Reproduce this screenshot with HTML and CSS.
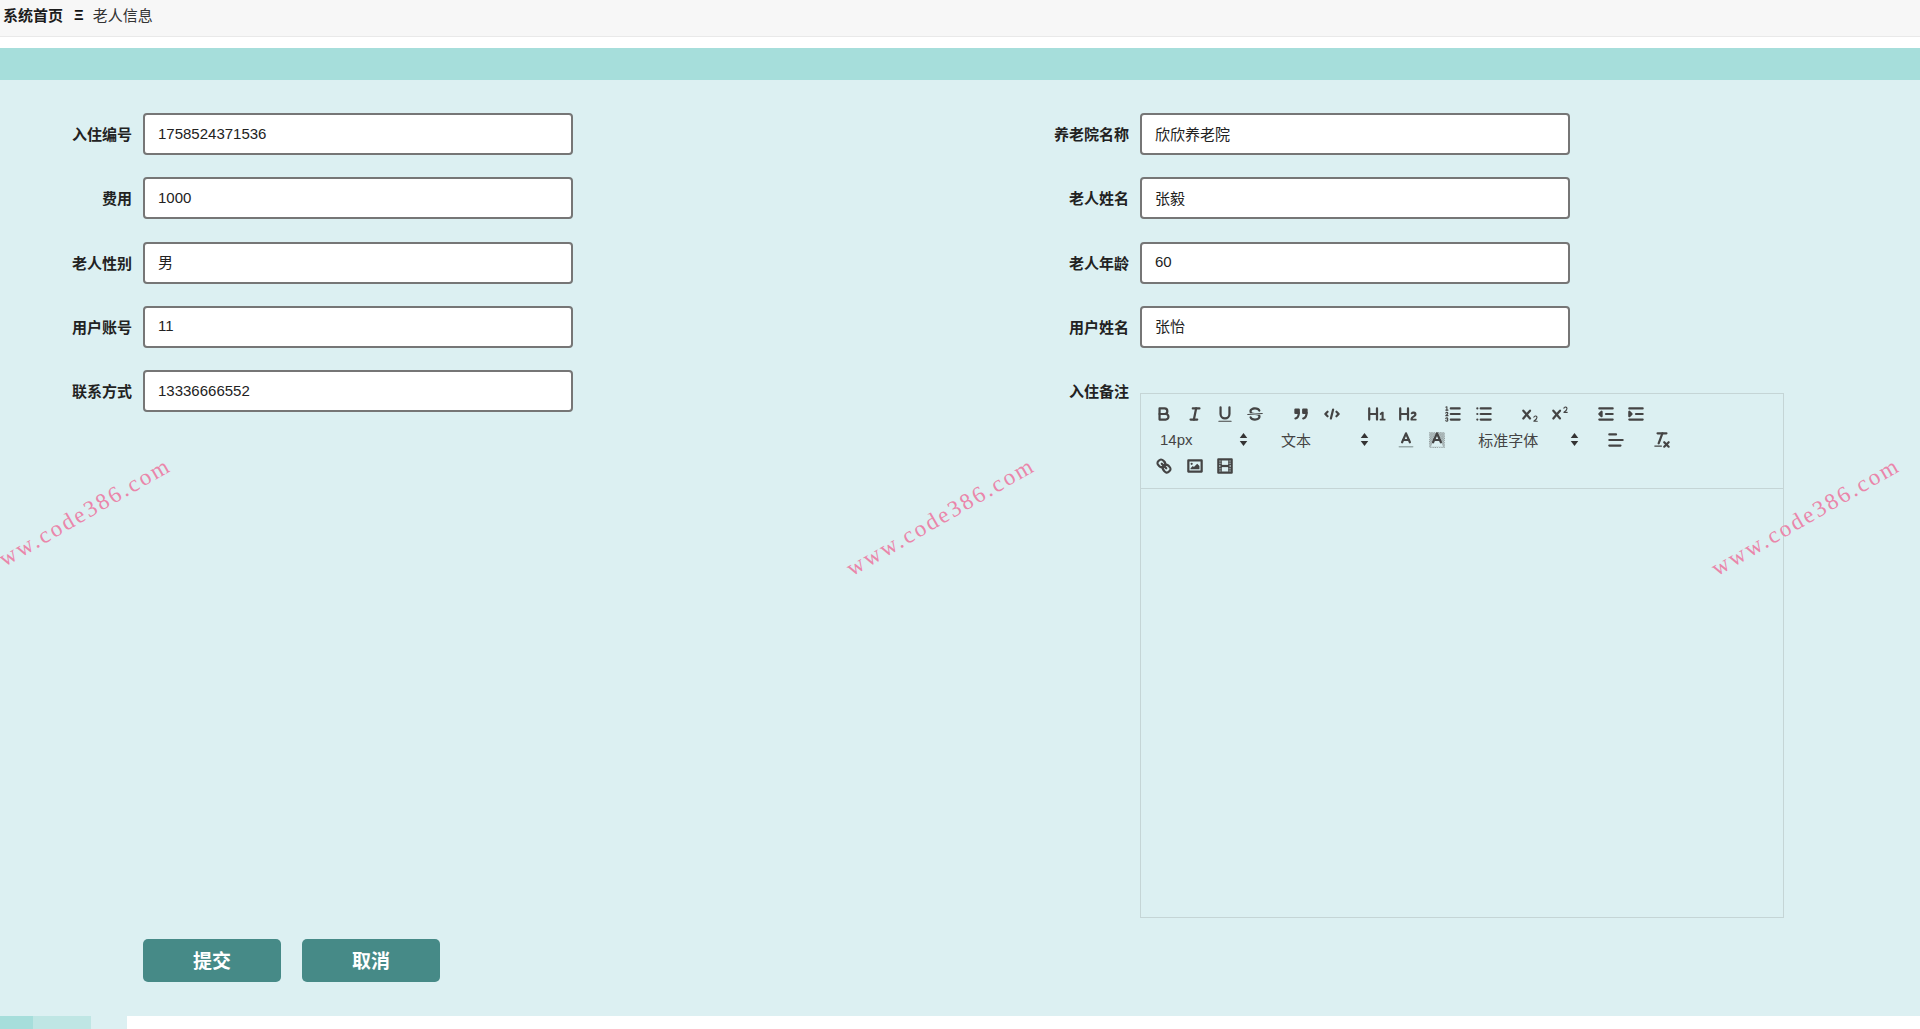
FILE: index.html
```html
<!DOCTYPE html>
<html lang="zh-CN">
<head>
<meta charset="utf-8">
<title>老人信息</title>
<link rel="stylesheet" href="styles.css">
</head>
<body>
<div class="page">
  <nav class="crumbs"><b class="crumb-home">系统首页</b><b class="crumb-sep">Ξ</b><span>老人信息</span></nav>
  <div class="gap-white"></div>
  <div class="band"></div>
  <main class="content">
    <form class="form">
      <div class="field"><label>入住编号</label><input value="1758524371536"></div>
      <div class="field"><label>养老院名称</label><input value="欣欣养老院"></div>
      <div class="field"><label>费用</label><input value="1000"></div>
      <div class="field"><label>老人姓名</label><input value="张毅"></div>
      <div class="field"><label>老人性别</label><input value="男"></div>
      <div class="field"><label>老人年龄</label><input value="60"></div>
      <div class="field"><label>用户账号</label><input value="11"></div>
      <div class="field"><label>用户姓名</label><input value="张怡"></div>
      <div class="field"><label>联系方式</label><input value="13336666552"></div>
      <div class="field"><label>入住备注</label>
        <div class="editor">
          <div class="toolbar">
            <div class="tb-row">
              <span class="group">
                <span class="btn"><svg class="ic" viewBox="0 0 18 18"><path d="M5,4H9.5A2.5,2.5,0,0,1,12,6.5v0A2.5,2.5,0,0,1,9.5,9H5A0,0,0,0,1,5,9V4A0,0,0,0,1,5,4Z"/><path d="M5,9h5.5A2.5,2.5,0,0,1,13,11.5v0A2.5,2.5,0,0,1,10.5,14H5a0,0,0,0,1,0,0V9A0,0,0,0,1,5,9Z"/></svg></span>
                <span class="btn"><svg class="ic" viewBox="0 0 18 18"><line x1="7" x2="13" y1="4" y2="4"/><line x1="5" x2="11" y1="14" y2="14"/><line x1="8" x2="10" y1="14" y2="4"/></svg></span>
                <span class="btn"><svg class="ic" viewBox="0 0 18 18"><path d="M5,3V9a4.012,4.012,0,0,0,4,4H9a4.012,4.012,0,0,0,4-4V3"/><rect class="f" height="1" rx="0.5" ry="0.5" width="12" x="3" y="15"/></svg></span>
                <span class="btn"><svg class="ic" viewBox="0 0 18 18"><line class="t" x1="15.5" x2="2.5" y1="8.5" y2="9.5"/><path class="f" d="M9.007,8C6.542,7.791,6,7.519,6,6.5,6,5.792,7.283,5,9,5c1.571,0,2.765.679,2.969,1.309a1,1,0,0,0,1.9-.617C13.356,4.106,11.354,3,9,3,6.2,3,4,4.538,4,6.5a3.2,3.2,0,0,0,.5,1.843Z"/><path class="f" d="M8.984,10C11.457,10.208,12,10.479,12,11.5c0,.708-1.283,1.5-3,1.5-1.571,0-2.765-.679-2.969-1.309a1,1,0,1,0-1.9.617C4.644,13.894,6.646,15,9,15c2.8,0,5-1.538,5-3.5a3.2,3.2,0,0,0-.5-1.843Z"/></svg></span>
              </span>
              <span class="group">
                <span class="btn"><svg class="ic" viewBox="0 0 18 18"><rect class="fs" height="3" width="3" x="4" y="5"/><rect class="fs" height="3" width="3" x="11" y="5"/><path d="M7,8c0,4.031-3,5-3,5"/><path d="M14,8c0,4.031-3,5-3,5"/></svg></span>
                <span class="btn"><svg class="ic" viewBox="0 0 18 18"><polyline points="5 7 3 9 5 11"/><polyline points="13 7 15 9 13 11"/><line x1="10" x2="8" y1="5" y2="13"/></svg></span>
              </span>
              <span class="group">
                <span class="btn"><svg class="ic" viewBox="0 0 18 18"><path class="f" d="M10,4V14a1,1,0,0,1-2,0V10H3v4a1,1,0,0,1-2,0V4A1,1,0,0,1,3,4V8H8V4a1,1,0,0,1,2,0Zm6.06787,9.209H14.98975V7.59863a.54085.54085,0,0,0-.605-.60547h-.62744a1.01119,1.01119,0,0,0-.748.29688L11.645,8.56641a.5435.5435,0,0,0-.022.8584l.28613.30762a.53861.53861,0,0,0,.84717.0332l.09912-.08789a1.2137,1.2137,0,0,0,.2417-.35254h.02246s-.01123.30859-.01123.60547V13.209H12.041a.54085.54085,0,0,0-.605.60547v.43945a.54085.54085,0,0,0,.605.60547h4.02686a.54085.54085,0,0,0,.605-.60547v-.43945A.54085.54085,0,0,0,16.06787,13.209Z"/></svg></span>
                <span class="btn"><svg class="ic" viewBox="0 0 18 18"><path class="f" d="M16.73975,13.81445v.43945a.54085.54085,0,0,1-.605.60547H11.855a.58392.58392,0,0,1-.64893-.60547V14.0127c0-2.90527,3.39941-3.42187,3.39941-4.55469a.77675.77675,0,0,0-.84717-.78125,1.17684,1.17684,0,0,0-.83594.38477c-.2749.26367-.561.374-.85791.13184l-.4292-.34082c-.30811-.24219-.38525-.51758-.1543-.81445a2.97155,2.97155,0,0,1,2.45361-1.17676,2.45393,2.45393,0,0,1,2.68408,2.40918c0,2.45312-3.1792,2.92676-3.27832,3.93848h2.79443A.54085.54085,0,0,1,16.73975,13.81445ZM9,3A.99974.99974,0,0,0,8,4V8H3V4A1,1,0,0,0,1,4V14a1,1,0,0,0,2,0V10H8v4a1,1,0,0,0,2,0V4A.99974.99974,0,0,0,9,3Z"/></svg></span>
              </span>
              <span class="group">
                <span class="btn"><svg class="ic" viewBox="0 0 18 18"><line x1="7" x2="15" y1="4" y2="4"/><line x1="7" x2="15" y1="9" y2="9"/><line x1="7" x2="15" y1="14" y2="14"/><line class="t" x1="2.5" x2="4.5" y1="5.5" y2="5.5"/><path class="f" d="M3.5,6A0.5,0.5,0,0,1,3,5.5V3.085l-0.276.138A0.5,0.5,0,0,1,2.053,3c-0.124-.247-0.023-0.324.224-0.447l1-.5A0.5,0.5,0,0,1,4,2.5v3A0.5,0.5,0,0,1,3.5,6Z"/><path class="t" d="M4.5,10.5h-2c0-.234,1.85-1.076,1.85-2.234A0.959,0.959,0,0,0,2.5,8.156"/><path class="t" d="M2.5,14.846a0.959,0.959,0,0,0,1.85-.109A0.7,0.7,0,0,0,3.75,14a0.688,0.688,0,0,0,.6-0.736,0.959,0.959,0,0,0-1.85-.109"/></svg></span>
                <span class="btn"><svg class="ic" viewBox="0 0 18 18"><line x1="6" x2="15" y1="4" y2="4"/><line x1="6" x2="15" y1="9" y2="9"/><line x1="6" x2="15" y1="14" y2="14"/><line x1="3" x2="3" y1="4" y2="4"/><line x1="3" x2="3" y1="9" y2="9"/><line x1="3" x2="3" y1="14" y2="14"/></svg></span>
              </span>
              <span class="group">
                <span class="btn"><svg class="ic" viewBox="0 0 18 18"><path class="f" d="M15.5,15H13.861a3.858,3.858,0,0,0,1.914-2.975,1.8,1.8,0,0,0-1.6-1.751A1.921,1.921,0,0,0,12.021,11.7a0.50013,0.50013,0,1,0,.957.291h0a0.914,0.914,0,0,1,1.053-.725,0.81,0.81,0,0,1,.744.762c0,1.076-1.16971,1.86982-1.93971,2.43082A1.45639,1.45639,0,0,0,12,15.5a0.5,0.5,0,0,0,.5.5h3A0.5,0.5,0,0,0,15.5,15Z"/><path class="f" d="M9.65,5.241a1,1,0,0,0-1.409.108L6,7.964,3.759,5.349A1,1,0,0,0,2.192,6.59178Q2.21541,6.6213,2.241,6.649L4.684,9.5,2.241,12.35A1,1,0,0,0,3.71,13.70722q0.02557-.02768.049-0.05722L6,11.036,8.241,13.65a1,1,0,1,0,1.567-1.24277Q9.78459,12.3777,9.759,12.35L7.316,9.5,9.759,6.651A1,1,0,0,0,9.65,5.241Z"/></svg></span>
                <span class="btn"><svg class="ic" viewBox="0 0 18 18"><path class="f" d="M15.5,7H13.861a4.015,4.015,0,0,0,1.914-2.975,1.8,1.8,0,0,0-1.6-1.751A1.922,1.922,0,0,0,12.021,3.7a0.5,0.5,0,1,0,.957.291,0.917,0.917,0,0,1,1.053-.725,0.81,0.81,0,0,1,.744.762c0,1.077-1.164,1.925-1.934,2.486A1.423,1.423,0,0,0,12,7.5a0.5,0.5,0,0,0,.5.5h3A0.5,0.5,0,0,0,15.5,7Z"/><path class="f" d="M9.651,5.241a1,1,0,0,0-1.41.108L6,7.964,3.759,5.349a1,1,0,1,0-1.519,1.3L4.683,9.5,2.241,12.35a1,1,0,1,0,1.519,1.3L6,11.036l2.241,2.614a1,1,0,0,0,1.519-1.3L7.317,9.5,9.759,6.651A1,1,0,0,0,9.651,5.241Z"/></svg></span>
              </span>
              <span class="group">
                <span class="btn"><svg class="ic" viewBox="0 0 18 18"><line x1="3" x2="15" y1="14" y2="14"/><line x1="3" x2="15" y1="4" y2="4"/><line x1="9" x2="15" y1="9" y2="9"/><polyline class="fs" points="5 7 5 11 3 9 5 7"/></svg></span>
                <span class="btn"><svg class="ic" viewBox="0 0 18 18"><line x1="3" x2="15" y1="14" y2="14"/><line x1="3" x2="15" y1="4" y2="4"/><line x1="9" x2="15" y1="9" y2="9"/><polyline class="fs" points="3 7 3 11 5 9 3 7"/></svg></span>
              </span>
            </div>
            <div class="tb-row">
              <span class="picker"><span>14px</span><svg class="updown" viewBox="0 0 8 14"><polygon points="4 1 7.5 5.5 .5 5.5"/><polygon points="4 13 7.5 8.5 .5 8.5"/></svg></span>
              <span class="picker"><span>文本</span><svg class="updown" viewBox="0 0 8 14"><polygon points="4 1 7.5 5.5 .5 5.5"/><polygon points="4 13 7.5 8.5 .5 8.5"/></svg></span>
              <span class="group">
                <span class="btn"><svg class="ic" viewBox="0 0 18 18"><line class="under" x1="3" x2="15" y1="15" y2="15"/><polyline points="5.5 11 9 3 12.5 11"/><line x1="11.63" x2="6.38" y1="9" y2="9"/></svg></span>
                <span class="btn"><svg class="ic" viewBox="0 0 18 18"><defs><pattern id="chk" width="2" height="2" patternUnits="userSpaceOnUse"><rect class="f" width="1" height="1"/><rect class="f" x="1" y="1" width="1" height="1"/></pattern></defs><rect class="chk" x="2" y="2" width="14" height="14"/><polygon class="hole" points="9 2.5 14.5 15 3.5 15"/><polyline points="5.5 11 9 3 12.5 11"/><line x1="11.63" x2="6.38" y1="9" y2="9"/></svg></span>
              </span>
              <span class="picker picker-wide"><span>标准字体</span><svg class="updown" viewBox="0 0 8 14"><polygon points="4 1 7.5 5.5 .5 5.5"/><polygon points="4 13 7.5 8.5 .5 8.5"/></svg></span>
              <span class="group">
                <span class="btn"><svg class="ic" viewBox="0 0 18 18"><line x1="3" x2="15" y1="9" y2="9"/><line x1="3" x2="13" y1="14" y2="14"/><line x1="3" x2="9" y1="4" y2="4"/></svg></span>
              </span>
              <span class="group">
                <span class="btn"><svg class="ic" viewBox="0 0 18 18"><line x1="5" x2="13" y1="3" y2="3"/><line x1="6" x2="9.35" y1="12" y2="3"/><line x1="11" x2="15" y1="11" y2="15"/><line x1="15" x2="11" y1="11" y2="15"/><rect class="f" height="1" rx="0.5" ry="0.5" width="7" x="2" y="14"/></svg></span>
              </span>
            </div>
            <div class="tb-row">
              <span class="group">
                <span class="btn"><svg class="ic" viewBox="0 0 18 18"><line x1="7" x2="11" y1="7" y2="11"/><path d="M8.9,4.577a3.476,3.476,0,0,1,.36,4.679A3.476,3.476,0,0,1,4.577,8.9C3.185,7.5,2.035,6.4,4.217,4.217S7.5,3.185,8.9,4.577Z"/><path d="M13.423,9.1a3.476,3.476,0,0,0-4.679-.36,3.476,3.476,0,0,0,.36,4.679c1.392,1.392,2.5,2.542,4.679.36S14.815,10.5,13.423,9.1Z"/></svg></span>
                <span class="btn"><svg class="ic" viewBox="0 0 18 18"><rect height="10" width="12" x="3" y="4"/><circle class="f" cx="6" cy="7" r="1"/><polyline class="f" points="5 12 5 11 7 9 8 10 11 7 13 9 13 12 5 12"/></svg></span>
                <span class="btn"><svg class="ic" viewBox="0 0 18 18"><rect height="12" width="12" x="3" y="3"/><rect class="f" height="12" width="1" x="5" y="3"/><rect class="f" height="12" width="1" x="12" y="3"/><rect class="f" height="2" width="8" x="5" y="8"/><rect class="f" height="1" width="3" x="3" y="5"/><rect class="f" height="1" width="3" x="3" y="7"/><rect class="f" height="1" width="3" x="3" y="10"/><rect class="f" height="1" width="3" x="3" y="12"/><rect class="f" height="1" width="3" x="12" y="5"/><rect class="f" height="1" width="3" x="12" y="7"/><rect class="f" height="1" width="3" x="12" y="10"/><rect class="f" height="1" width="3" x="12" y="12"/></svg></span>
              </span>
            </div>
          </div>
        </div>
      </div>
    </form>
    <div class="actions">
      <button type="button" class="action">提交</button>
      <button type="button" class="action">取消</button>
    </div>
  </main>
  <div class="strip"><i class="strip-a"></i><i class="strip-b"></i><i class="strip-c"></i><i class="strip-d"></i></div>
  <span class="mark mark-1">www.code386.com</span>
  <span class="mark mark-2">www.code386.com</span>
  <span class="mark mark-3">www.code386.com</span>
</div>
</body>
</html>
```
FILE: styles.css
```css
* { box-sizing: border-box; }
html, body { margin: 0; height: 100%; }
body {
  background: #fff;
  color: #222;
  font-family: "Liberation Sans", "Noto Sans CJK SC", sans-serif;
  font-size: 15px;
  overflow: hidden;
}
.page { position: relative; width: 1920px; height: 1029px; overflow: hidden; }

.crumbs {
  height: 37px;
  padding: 0 0 7px 3px;
  background: #f7f7f7;
  border-bottom: 1px solid #e9e9e9;
  display: flex;
  align-items: center;
  color: #333;
}
.crumb-home { color: #1c1c1c; }
.crumb-sep { margin: 0 9px 0 11px; font-size: 15px; font-weight: 700; color: #111; }
.gap-white { height: 11px; }
.band { height: 32px; background: #a6dedb; }

.content { height: 936px; padding-top: 33px; background: #dcf0f2; }
.form {
  display: grid;
  grid-template-columns: 997px 1fr;
  row-gap: 22.3px;
  align-items: start;
}
.field { display: flex; column-gap: 11px; }
.field label {
  width: 132px;
  height: 42px;
  line-height: 44px;
  text-align: right;
  font-weight: 700;
  color: #222;
  flex: none;
}
.field input {
  width: 429.5px;
  height: 42px;
  padding: 0 13px 2px;
  border: 2px solid #767676;
  border-radius: 4px;
  background: #fff;
  color: #222;
  font: 15px "Liberation Sans", "Noto Sans CJK SC", sans-serif;
  outline: none;
}

.editor {
  width: 644px;
  height: 525px;
  margin-top: 23px;
  border: 1px solid #c5d5d6;
}
.toolbar {
  height: 95px;
  padding: 7px 8px 0;
  border-bottom: 1px solid #c5d5d6;
}
.tb-row { display: flex; height: 26px; align-items: center; }
.group { display: flex; margin-right: 15.4px; }
.group:last-child { margin-right: 0; }
.btn { width: 30.4px; height: 24px; display: flex; align-items: center; justify-content: center; }
.ic {
  width: 20px;
  height: 20px;
  fill: none;
  stroke: #444;
  stroke-width: 2;
  stroke-linecap: round;
  stroke-linejoin: round;
}
.ic .f { fill: #444; stroke: none; }
.ic .t { stroke-width: 1; }
.ic .fs { fill: #444; }
.ic .under { stroke: #9aa; stroke-width: 1.4; }
.ic .chk { fill: url(#chk); stroke: none; opacity: .7; }
.ic .hole { fill: #dcf0f2; stroke: none; }

.picker {
  width: 108px;
  margin-right: 13px;
  padding: 0 9px 2px 11px;
  display: flex;
  align-items: center;
  justify-content: space-between;
  color: #444;
  font-size: 15px;
}
.picker-wide { width: 120px; margin-right: 13.5px; padding-right: 8px; }
.updown { width: 9px; height: 15px; fill: #333; flex: none; }

.actions { display: flex; column-gap: 21px; margin: 21px 0 0 143px; }
.action {
  width: 138px;
  height: 43px;
  padding: 0 0 2px;
  border: 0;
  border-radius: 5px;
  background: #468a87;
  color: #fff;
  font: 700 19px "Liberation Sans", "Noto Sans CJK SC", sans-serif;
}

.strip { display: flex; height: 13px; }
.strip i { display: block; }
.strip-a { width: 33px; background: #a6dedb; }
.strip-b { width: 58px; background: #bfe6e4; }
.strip-c { width: 36px; background: #dcf0f2; }
.strip-d { flex: 1; background: #fff; }

.mark {
  position: absolute;
  top: 503px;
  width: 240px;
  text-align: center;
  font: 23px/28px "Liberation Serif", serif;
  letter-spacing: 2.4px;
  color: #ea86aa;
  transform: rotate(-30deg);
  white-space: nowrap;
}
.mark-1 { left: -43px; }
.mark-2 { left: 821px; }
.mark-3 { left: 1686px; }
```
